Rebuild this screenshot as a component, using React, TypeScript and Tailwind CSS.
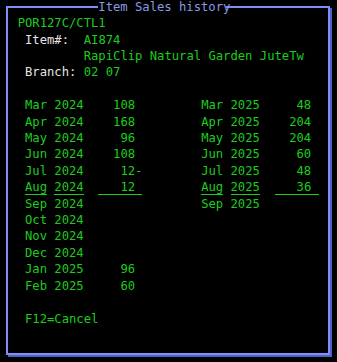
type Cell = { period: string; qty?: string; sign?: string };

const left: Cell[] = [
  { period: "Mar 2024", qty: "108" },
  { period: "Apr 2024", qty: "168" },
  { period: "May 2024", qty: "96" },
  { period: "Jun 2024", qty: "108" },
  { period: "Jul 2024", qty: "12", sign: "-" },
  { period: "Aug 2024", qty: "12" },
  { period: "Sep 2024" },
  { period: "Oct 2024" },
  { period: "Nov 2024" },
  { period: "Dec 2024" },
  { period: "Jan 2025", qty: "96" },
  { period: "Feb 2025", qty: "60" },
];

const right: Cell[] = [
  { period: "Mar 2025", qty: "48" },
  { period: "Apr 2025", qty: "204" },
  { period: "May 2025", qty: "204" },
  { period: "Jun 2025", qty: "60" },
  { period: "Jul 2025", qty: "48" },
  { period: "Aug 2025", qty: "36" },
  { period: "Sep 2025" },
];

// current month is underlined on screen
const CURRENT = 5;

function Period({ cell, underline }: { cell: Cell; underline: boolean }) {
  const [mon, yr] = cell.period.split(" ");
  if (!underline) return <span>{cell.period}</span>;
  return (
    <span>
      <span className="border-b border-[#1ccd1c]">{mon}</span>{" "}
      <span className="border-b border-[#1ccd1c]">{yr}</span>
    </span>
  );
}

function Qty({ cell, underline }: { cell: Cell; underline: boolean }) {
  if (cell.qty === undefined) return <span>{"      "}</span>;
  const text = cell.qty.padStart(5, " ") + (cell.sign ?? " ");
  return <span className={underline ? "border-b border-[#1ccd1c]" : ""}>{text}</span>;
}

export default function App() {
  return (
    <div className="w-[337px] h-[362px] bg-black overflow-hidden pt-[6px] pl-[6px] font-['DejaVu_Sans_Mono',monospace] text-[12.2px] leading-[16.4px] whitespace-pre">
      <div className="relative w-[324px] h-[349px] border-2 border-[#7d8ff2] shadow-[2px_2px_0_#4f5fc8] pt-[7.2px] pl-[9.67px] text-[#1ccd1c]">
        {/* window title over the top border */}
        <span className="absolute left-[90.3px] top-[-9.2px] h-[16.4px] w-[128px] bg-black text-[#8a9ae6]">
          Item Sales history
        </span>

        <div>POR127C/CTL1</div>
        <div>
          <span className="text-[#e6e6e6]">{" Item#:  "}</span>AI874
        </div>
        <div>{"         RapiClip Natural Garden JuteTw"}</div>
        <div>
          <span className="text-[#e6e6e6]">{" Branch: "}</span>02 07
        </div>
        <div>{" "}</div>

        {left.map((l, i) => {
          const r = right[i];
          const u = i === CURRENT;
          return (
            <div key={l.period}>
              {" "}
              <Period cell={l} underline={u} />
              {"  "}
              <Qty cell={l} underline={u} />
              {r && (
                <>
                  {"        "}
                  <Period cell={r} underline={u} />
                  {"  "}
                  <Qty cell={r} underline={u} />
                </>
              )}
            </div>
          );
        })}

        <div>{" "}</div>
        <div>{" F12=Cancel"}</div>
      </div>
    </div>
  );
}
